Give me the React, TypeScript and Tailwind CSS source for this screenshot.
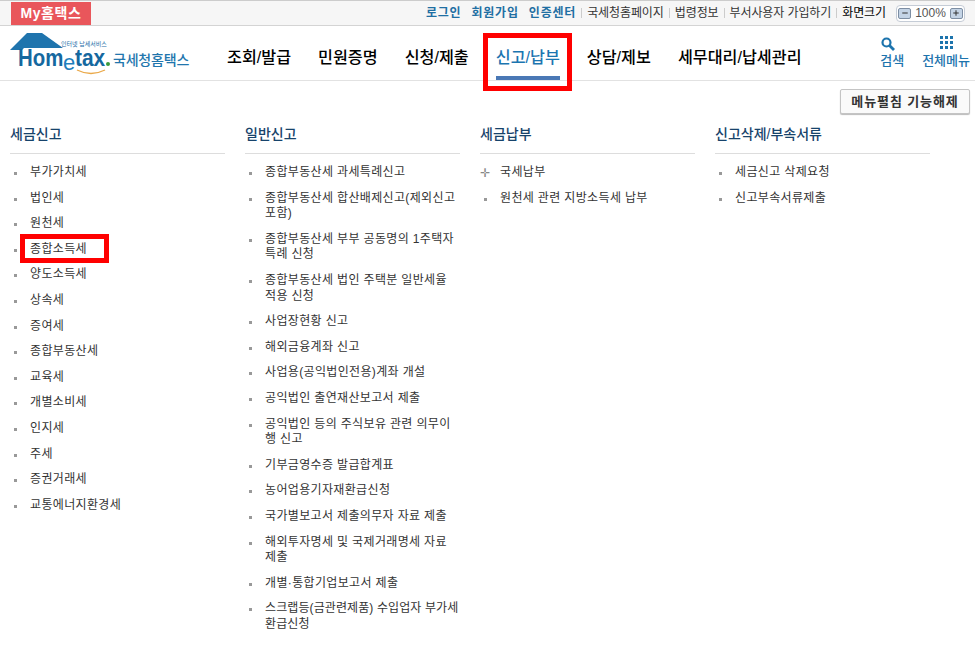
import { Minus, Plus } from "lucide-react";

type MenuColumn = {
  title: string;
  items: string[];
};

const font = "font-['Liberation_Sans','Noto_Sans_CJK_KR',sans-serif]";

const columns: MenuColumn[] = [
  {
    title: "세금신고",
    items: [
      "부가가치세",
      "법인세",
      "원천세",
      "종합소득세",
      "양도소득세",
      "상속세",
      "증여세",
      "종합부동산세",
      "교육세",
      "개별소비세",
      "인지세",
      "주세",
      "증권거래세",
      "교통에너지환경세",
    ],
  },
  {
    title: "일반신고",
    items: [
      "종합부동산세 과세특례신고",
      "종합부동산세 합산배제신고(제외신고 포함)",
      "종합부동산세 부부 공동명의 1주택자 특례 신청",
      "종합부동산세 법인 주택분 일반세율 적용 신청",
      "사업장현황 신고",
      "해외금융계좌 신고",
      "사업용(공익법인전용)계좌 개설",
      "공익법인 출연재산보고서 제출",
      "공익법인 등의 주식보유 관련 의무이행 신고",
      "기부금영수증 발급합계표",
      "농어업용기자재환급신청",
      "국가별보고서 제출의무자 자료 제출",
      "해외투자명세 및 국제거래명세 자료 제출",
      "개별·통합기업보고서 제출",
      "스크랩등(금관련제품) 수입업자 부가세 환급신청",
    ],
  },
  {
    title: "세금납부",
    items: ["국세납부", "원천세 관련 지방소득세 납부"],
  },
  {
    title: "신고삭제/부속서류",
    items: ["세금신고 삭제요청", "신고부속서류제출"],
  },
];

const navItems = ["조회/발급", "민원증명", "신청/제출", "신고/납부", "상담/제보", "세무대리/납세관리"];

function Logo() {
  return (
    <div className="relative h-[44px] w-[180px] shrink-0">
      <svg viewBox="0 0 56 20" className="absolute left-0 top-0 h-[20px] w-[56px]">
        <path d="M0 18 L17 1 L32 1 L53 16 L14 16 L12 18 Z" fill="#1f74ad" />
      </svg>
      <span className="absolute left-[51px] top-[9px] whitespace-nowrap text-[6px] leading-[7px] text-[#1d6fa8]">
        인터넷 납세서비스
      </span>
      <span className="absolute left-[8px] top-[17px] origin-left scale-x-[0.85] font-['Liberation_Sans',sans-serif] text-[24px] font-bold leading-[18px] text-[#15689f]">
        Hom
      </span>
      <span className="absolute left-[53px] top-[20px] font-['Liberation_Sans',sans-serif] text-[22px] leading-[22px] text-[#1f7fbd]">
        e
      </span>
      <span className="absolute left-[65px] top-[17px] origin-left scale-x-[0.87] font-['Liberation_Sans',sans-serif] text-[24px] font-bold leading-[18px] text-[#15689f]">
        tax
      </span>
      <span className="absolute left-[96px] top-[30px] h-[4px] w-[4px] rounded-full bg-[#3a9a3c]" />
      <svg viewBox="0 0 30 6" className="absolute left-[66px] top-[37px] h-[6px] w-[30px]">
        <path d="M1 1 Q15 8 29 1" fill="none" stroke="#eaa94a" strokeWidth="1.3" />
      </svg>
      <span className="absolute left-[103px] top-[19px] whitespace-nowrap text-[14px] font-medium leading-[18px] tracking-[-0.2px] text-[#2276ad]">
        국세청홈택스
      </span>
    </div>
  );
}

function TopBar() {
  return (
    <div className="flex h-[26px] items-center justify-between border-y border-t-[#cccccc] border-b-[#d4d4d4] bg-[#f6f6f6] pl-[11px] pr-[10px]">
      <div className="-mb-px flex h-[23px] w-[80px] items-center justify-center bg-[#e9565b] text-[14px] font-bold tracking-[0.6px] text-white">
        My홈택스
      </div>
      <div className="flex items-center text-[12px] tracking-[-0.1px] text-[#333333]">
        <span className="font-bold tracking-[0.8px] text-[#1f6fa3]">로그인</span>
        <span className="ml-[10px] font-bold tracking-[0.8px] text-[#1f6fa3]">회원가입</span>
        <span className="ml-[10px] font-bold tracking-[0.8px] text-[#1f6fa3]">인증센터</span>
        <span className="mx-[5px] h-[10px] w-px bg-[#cccccc]" />
        <span>국세청홈페이지</span>
        <span className="mx-[5px] h-[10px] w-px bg-[#cccccc]" />
        <span>법령정보</span>
        <span className="mx-[5px] h-[10px] w-px bg-[#cccccc]" />
        <span>부서사용자 가입하기</span>
        <span className="mx-[5px] h-[10px] w-px bg-[#cccccc]" />
        <span className="text-black">화면크기</span>
        <div className="ml-[10px] flex h-[17px] w-[69px] items-center justify-between rounded-[4px] border border-[#c5ccd6] bg-white px-px">
          <span className="flex h-[11px] w-[13px] items-center justify-center rounded-[2px] border border-[#7d8ea3] bg-[#c4d4e6]">
            <Minus size={8} strokeWidth={3} />
          </span>
          <span className="text-[12px] leading-none tracking-normal text-[#555555]">100%</span>
          <span className="flex h-[11px] w-[13px] items-center justify-center rounded-[2px] border border-[#7d8ea3] bg-[#c4d4e6]">
            <Plus size={8} strokeWidth={3} />
          </span>
        </div>
      </div>
    </div>
  );
}

function NavBar() {
  return (
    <div className="flex h-[55px] items-start border-b border-[#e2e2e2] bg-white pl-[10px] pr-[5px]">
      <div className="mt-[6px]">
        <Logo />
      </div>
      <nav className="ml-[37px] flex h-full flex-1 items-start gap-[27px] text-[16.2px] font-medium text-black">
        {navItems.map((label) => (
          <a
            key={label}
            className={
              label === "신고/납부"
                ? "mt-[21px] flex flex-col whitespace-nowrap leading-[20px] text-[#1b75b0]"
                : "mt-[21px] whitespace-nowrap leading-[20px]"
            }
          >
            {label}
            {label === "신고/납부" && <span className="mt-[9px] h-[4px] bg-[#4a78b5]" />}
          </a>
        ))}
      </nav>
      <div className="mt-[10px] flex text-[13px] font-medium text-[#1d74ad]">
        <div className="flex flex-col">
          <svg viewBox="0 0 14 14" className="ml-px mt-px h-[14px] w-[14px]">
            <circle cx="5.5" cy="5.5" r="4" fill="none" stroke="#1d74ad" strokeWidth="2.2" />
            <path d="M8.5 8.5 L13 13" stroke="#1d74ad" strokeWidth="2.8" />
          </svg>
          <span className="mt-[3px] leading-[14px]">검색</span>
        </div>
        <div className="ml-[18px] flex flex-col items-center">
          <div className="grid h-[13px] w-[13px] grid-cols-3 gap-[2px]">
            {Array.from({ length: 9 }).map((_, i) => (
              <span key={i} className="bg-[#1d74ad]" />
            ))}
          </div>
          <span className="mt-[5px] leading-[14px]">전체메뉴</span>
        </div>
      </div>
    </div>
  );
}

function Column({ column }: { column: MenuColumn }) {
  return (
    <div className="w-[215px] shrink-0">
      <h2 className="border-b border-[#dddddd] pb-[10px] text-[14px] font-medium leading-[18px] text-[#17436b]">
        {column.title}
      </h2>
      <ul className="mt-[11px] flex flex-col gap-[10px] text-[12px] leading-[15.6px] tracking-[0.35px] text-[#333333]">
        {column.items.map((item) => (
          <li
            key={item}
            // 스크랩등 항목은 "부가세"까지 한 줄에 들어가야 해서 자간을 조금 줄임
            className={
              item.startsWith("스크랩")
                ? "relative break-all pl-[20px] tracking-[0.1px]"
                : "relative break-all pl-[20px]"
            }
          >
            {item === "국세납부" ? (
              <span className="absolute left-0 top-[2px] text-[12px] leading-[12px] text-[#888888]">✛</span>
            ) : (
              <span className="absolute left-[4px] top-[7px] h-[3px] w-[3px] bg-[#999999]" />
            )}
            {item}
          </li>
        ))}
      </ul>
    </div>
  );
}

export default function App() {
  return (
    <div className={`relative min-h-[646px] overflow-hidden bg-white ${font}`}>
      <TopBar />
      <NavBar />
      <div className="flex justify-end pr-[5px] pt-[8px]">
        <button className="h-[25px] w-[130px] rounded-[2px] border border-[#c4c4c4] bg-[#fafafa] text-[13px] font-bold tracking-[0.9px] text-[#333333] shadow-[0_1px_1px_#bbbbbb]">
          메뉴펼침 기능해제
        </button>
      </div>
      <div className="flex gap-[20px] pl-[10px] pt-[11px]">
        {columns.map((column) => (
          <Column key={column.title} column={column} />
        ))}
      </div>
      {/* 빨간 강조 박스 */}
      <div className="absolute left-[483px] top-[33px] h-[58px] w-[89px] border-[5px] border-[#ff0000]" />
      <div className="absolute left-[20px] top-[234px] h-[29px] w-[89px] border-[5px] border-[#ff0000]" />
    </div>
  );
}
